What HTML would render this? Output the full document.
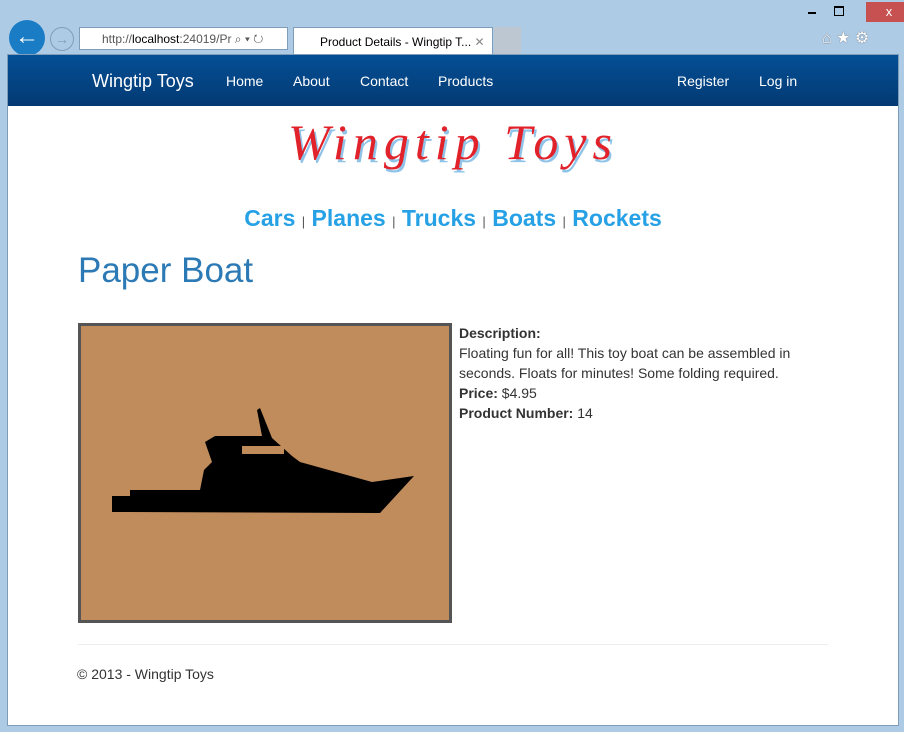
<!DOCTYPE html>
<html><head><style>
body{margin:0;width:904px;height:732px;background:#aecbe6;font-family:"Liberation Sans",sans-serif;position:relative;overflow:hidden}
.win{position:absolute;left:7px;top:54px;width:890px;height:670px;background:#fff;border:1px solid #7f9db9}
.nav{height:51px;background:linear-gradient(#044f95,#033a73);color:#fff;position:relative;font-size:14px}
.nav span{position:absolute;top:18px}
a{text-decoration:none}
</style></head><body>
<div style="position:absolute;left:866px;top:2px;width:46px;height:20px;background:#c75050;color:#fff;text-align:center;font-size:13px;line-height:20px">x</div>
<div style="position:absolute;left:808px;top:12px;width:8px;height:2px;background:#000"></div>
<div style="position:absolute;left:834px;top:6px;width:8px;height:7px;border:1px solid #000;border-top-width:2px"></div>
<div style="position:absolute;left:9px;top:20px;width:36px;height:36px;border-radius:50%;background:#1a7cc5;color:#fff;font-size:24px;text-align:center;line-height:34px;font-weight:bold">←</div>
<div style="position:absolute;left:50px;top:27px;width:22px;height:22px;border-radius:50%;border:1px solid #7f9db9;color:#7f9db9;text-align:center;line-height:22px;font-size:14px">→</div>
<div style="position:absolute;left:79px;top:27px;width:209px;height:23px;background:#fff;border:1px solid #7f9db9;font-size:12px;line-height:23px;color:#555;padding-left:22px;box-sizing:border-box">http://<b style="color:#000;font-weight:normal">localhost</b>:24019/Pr ⌕ ▾ ↻</div>
<div style="position:absolute;left:293px;top:27px;width:200px;height:28px;background:#fff;border:1px solid #7f9db9;border-bottom:none;font-size:12px;line-height:28px;padding-left:26px;box-sizing:border-box">Product Details - Wingtip T... <span style="color:#888">✕</span></div>
<div style="position:absolute;left:494px;top:27px;width:27px;height:27px;background:#bcc7d2"></div>
<div style="position:absolute;left:822px;top:28px;font-size:16px;color:#fff;text-shadow:0 0 1px #333">⌂ ★ ⚙</div>
<div class="win">
<div class="nav">
<span style="left:84px;top:16px;font-size:18px">Wingtip Toys</span>
<span style="left:218px">Home</span><span style="left:285px">About</span><span style="left:352px">Contact</span><span style="left:430px">Products</span>
<span style="left:669px">Register</span><span style="left:751px">Log in</span>
</div>
<div style="position:absolute;left:0;width:890px;top:58px;text-align:center;font-family:'Liberation Serif',cursive;font-style:italic;font-size:50px;color:#e2222a;text-shadow:2px 3px 0 #8fc4e8;letter-spacing:6px">Wingtip Toys</div>
<div style="position:absolute;left:0;width:890px;top:150px;text-align:center;font-size:23px;font-weight:bold;color:#27a1e5">Cars <span style="font-size:13px;color:#555;font-weight:normal">|</span> Planes <span style="font-size:13px;color:#555;font-weight:normal">|</span> Trucks <span style="font-size:13px;color:#555;font-weight:normal">|</span> Boats <span style="font-size:13px;color:#555;font-weight:normal">|</span> Rockets</div>
<div style="position:absolute;left:70px;top:196px;font-size:35px;color:#2c7ab5">Paper Boat</div>
<div style="position:absolute;left:70px;top:268px;width:368px;height:294px;border:3px solid #555;background:#c08c5c">
<svg width="368" height="294" viewBox="81 326 368 294"><polygon fill="#000" points="112,512 112,496 130,496 130,490 200,490 204,470 212,462 205,442 215,436 262,436 257,410 260,408 272,438 292,456 300,462 372,482 414,476 380,513"/><rect x="242" y="446" width="42" height="8" fill="#c08c5c"/></svg></div>
<div style="position:absolute;left:451px;top:268px;width:350px;font-size:14px;line-height:20px;color:#333"><b>Description:</b><br>Floating fun for all! This toy boat can be assembled in seconds. Floats for minutes! Some folding required.<br><b>Price:</b> $4.95<br><b>Product Number:</b> 14</div>
<div style="position:absolute;left:70px;top:589px;width:750px;border-top:1px solid #eee"></div>
<div style="position:absolute;left:69px;top:611px;font-size:14px;color:#333">© 2013 - Wingtip Toys</div>
</div>
</body></html>
